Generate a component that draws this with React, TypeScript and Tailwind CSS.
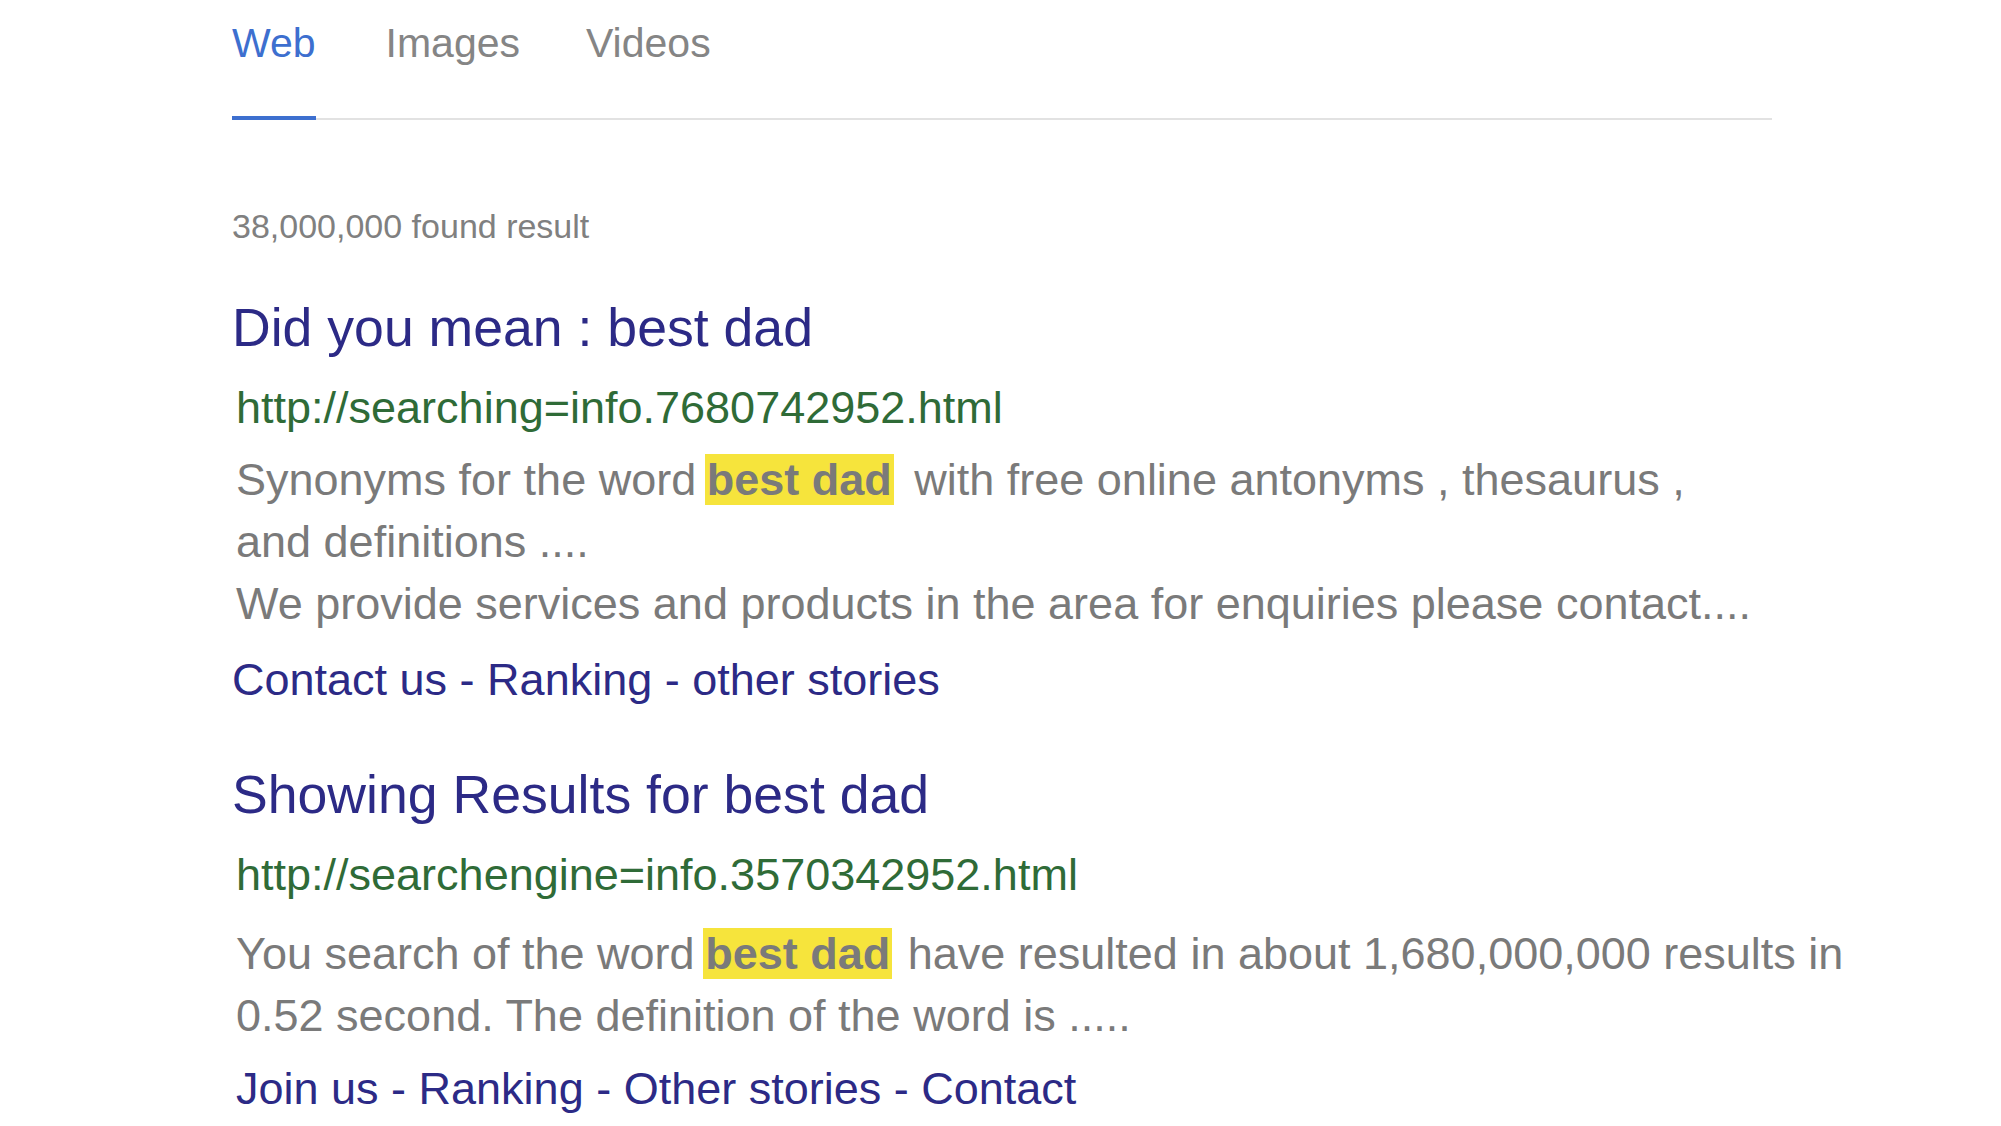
import React from "react";

const Mark: React.FC<{ children: React.ReactNode; className?: string }> = ({
  children,
  className = "",
}) => (
  <span className={`-ml-[4px] bg-[#f6e43c] px-[2px] font-bold ${className}`}>
    {children}
  </span>
);

const tabs = ["Web", "Images", "Videos"];

export default function App() {
  return (
    <div className="min-h-screen bg-white font-['Liberation_Sans',Arial,sans-serif]">
      <div className="pl-[232px] pr-[229px]">
        {/* tabs */}
        <div className="flex border-b-2 border-[#e2e2e2]">
          {tabs.map((t, i) => (
            <div
              key={t}
              className={
                i === 0
                  ? "-mb-[2px] border-b-4 border-[#3d6fcf] pt-[20px] pb-[50px] text-[41px] leading-[46px] text-[#3d6fcf]"
                  : i === 1
                  ? "ml-[70px] pt-[20px] pb-[52px] text-[41px] leading-[46px] text-[#858585]"
                  : "ml-[66px] pt-[20px] pb-[52px] text-[41px] leading-[46px] text-[#858585]"
              }
            >
              {t}
            </div>
          ))}
        </div>

        <p className="mt-[86px] text-[34px] leading-[40px] text-[#808080]">
          38,000,000 found result
        </p>

        {/* result 1 */}
        <h2 className="mt-[50px] text-[53.6px] leading-[62px] text-[#2c2a86]">
          Did you mean : best dad
        </h2>
        <div className="pl-[4px]">
          <p className="mt-[22px] text-[45px] leading-[56px] text-[#2f6b37]">
            http://searching=info.7680742952.html
          </p>
          <p className="mt-[13px] whitespace-nowrap text-[45px] leading-[62px] text-[#7a7a7a]">
            Synonyms for the word <Mark className="mr-[8px]">best dad</Mark> with
            free online antonyms , thesaurus ,
            <br />
            and definitions ....
            <br />
            We provide services and products in the area for enquiries please
            contact....
          </p>
        </div>
        <p className="mt-[17px] text-[45px] leading-[56px] text-[#2c2a86]">
          Contact us - Ranking - other stories
        </p>

        {/* result 2 */}
        <h2 className="mt-[55px] text-[53.6px] leading-[62px] text-[#2c2a86]">
          Showing Results for best dad
        </h2>
        <div className="pl-[4px]">
          <p className="mt-[22px] text-[45px] leading-[56px] text-[#2f6b37]">
            http://searchengine=info.3570342952.html
          </p>
          <p className="mt-[20px] whitespace-nowrap text-[45px] leading-[62px] text-[#7a7a7a]">
            You search of the word <Mark className="mr-[3px]">best dad</Mark>{" "}
            have resulted in about 1,680,000,000 results in
            <br />
            0.52 second. The definition of the word is .....
          </p>
          <p className="mt-[14px] text-[45px] leading-[56px] text-[#2c2a86]">
            Join us - Ranking - Other stories - Contact
          </p>
        </div>
      </div>
    </div>
  );
}
